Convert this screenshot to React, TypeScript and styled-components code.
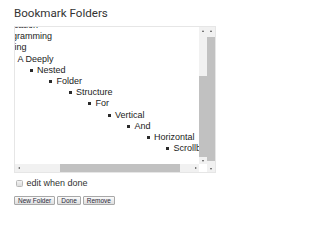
import React, { useLayoutEffect, useRef, useState } from "react";
import styled, { createGlobalStyle, css } from "styled-components";

const GlobalStyle = createGlobalStyle`
  html, body { margin: 0; padding: 0; background: #fff; }
  body { font-family: "Liberation Sans", Arial, sans-serif; color: #222; }
`;

const Page = styled.div`
  padding: 7px 0 0 14px;
  width: 202px;
`;

const Title = styled.h1`
  margin: 0 0 6px;
  font-family: Roboto, "Liberation Sans", Arial, sans-serif;
  font-size: 11.6px;
  line-height: 13px;
  font-weight: normal;
  color: #333;
`;

const OuterBox = styled.div`
  box-sizing: border-box;
  display: flex;
  width: 202px;
  height: 147px;
  border: 1px solid #e6e6e6;
`;

const OuterViewport = styled.div`
  flex: none;
  width: 192px;
  overflow: hidden;
`;

const OuterContent = styled.div`
  padding-bottom: 8px;
`;

const InnerPane = styled.div`
  display: flex;
  flex-direction: column;
  width: 192px;
  height: 145px;
`;

const InnerRow = styled.div`
  flex: 1;
  display: flex;
  min-height: 0;
`;

const TreeViewport = styled.div`
  flex: 1;
  min-width: 0;
  overflow: hidden;
`;

const BottomRow = styled.div`
  flex: none;
  display: flex;
  height: 8px;
`;

const Corner = styled.div`
  flex: none;
  width: 8px;
  background: #fff;
`;

/* ---- scrollbars ---- */
const Bar = styled.div<{ $vertical: boolean }>`
  display: flex;
  flex-direction: ${(p) => (p.$vertical ? "column" : "row")};
  background: #f1f1f1;
  ${(p) =>
    p.$vertical
      ? css`
          flex: none;
          width: 8px;
        `
      : css`
          flex: 1;
          min-width: 0;
          height: 8px;
        `}
`;

type Dir = "up" | "down" | "left" | "right";

const arrowShape: Record<Dir, ReturnType<typeof css>> = {
  up: css`
    border-left: 1.5px solid transparent;
    border-right: 1.5px solid transparent;
    border-bottom: 2px solid #505050;
  `,
  down: css`
    border-left: 1.5px solid transparent;
    border-right: 1.5px solid transparent;
    border-top: 2px solid #505050;
  `,
  left: css`
    border-top: 1.5px solid transparent;
    border-bottom: 1.5px solid transparent;
    border-right: 2px solid #505050;
  `,
  right: css`
    border-top: 1.5px solid transparent;
    border-bottom: 1.5px solid transparent;
    border-left: 2px solid #505050;
  `,
};

const Arrow = styled.div<{ $dir: Dir }>`
  flex: none;
  display: flex;
  align-items: center;
  justify-content: center;
  ${(p) =>
    p.$dir === "up" || p.$dir === "down"
      ? css`
          height: 7px;
        `
      : css`
          width: 7px;
        `}
  &::after {
    content: "";
    width: 0;
    height: 0;
    ${(p) => arrowShape[p.$dir]}
  }
`;

const Track = styled.div<{ $vertical: boolean }>`
  flex: 1;
  display: flex;
  flex-direction: ${(p) => (p.$vertical ? "column" : "row")};
  min-width: 0;
  min-height: 0;
`;

const TrackGap = styled.div`
  flex: none;
`;

const Thumb = styled.div`
  flex: none;
  background: #c1c1c1;
`;

type Metrics = { size: number; pos: number };

function Scrollbar({ vertical, size, pos }: { vertical: boolean } & Metrics) {
  const before = pos * (1 - size) * 100;
  return (
    <Bar $vertical={vertical}>
      <Arrow $dir={vertical ? "up" : "left"} />
      <Track $vertical={vertical}>
        <TrackGap style={{ flexBasis: `${before}%` }} />
        <Thumb style={{ flexBasis: `${size * 100}%` }} />
      </Track>
      <Arrow $dir={vertical ? "down" : "right"} />
    </Bar>
  );
}

/* ---- tree ---- */
const TreeList = styled.div`
  width: max-content;
  padding: 8px 9px 9.6px 41px;
  font-size: 9px;
  line-height: 11.2px;
  color: #222;
`;

const TreeItem = styled.div<{ $level: number }>`
  padding-left: ${(p) => p.$level * 19.5}px;
  white-space: nowrap;
  &::before {
    content: "";
    display: inline-block;
    width: 3px;
    height: 3px;
    background: #2a2a2a;
    margin-left: -7.5px;
    margin-right: 4.5px;
    vertical-align: 1px;
  }
`;

const OptionRow = styled.label`
  display: flex;
  align-items: center;
  gap: 4px;
  margin-top: 5px;
  font-size: 9px;
  line-height: 10px;
  color: #333;
`;

const Check = styled.input`
  appearance: none;
  margin: 0 0 0 1.5px;
  width: 7px;
  height: 7px;
  box-sizing: border-box;
  border: 1px solid #b8b8b8;
  border-radius: 1.5px;
  background: linear-gradient(#f3f3f3, #dcdcdc);
`;

const ButtonRow = styled.div`
  display: flex;
  gap: 2px;
  margin-top: 8px;
`;

const Button = styled.button`
  box-sizing: border-box;
  height: 9px;
  margin: 0;
  padding: 0 3px;
  border: 1px solid #a8a8a8;
  border-radius: 1px;
  background: linear-gradient(#fbfbfb, #dedede);
  font-family: "Liberation Sans", Arial, sans-serif;
  font-size: 6.5px;
  line-height: 7px;
  color: #2a2a3a;
`;

const items: [string, number][] = [
  ["Bookmarks Bar", 0],
  ["Other Bookmarks", 0],
  ["Work", 0],
  ["Reading", 0],
  ["News", 0],
  ["Education", 0],
  ["Programming", 0],
  ["Testing", 0],
  ["A Deeply", 1],
  ["Nested", 2],
  ["Folder", 3],
  ["Structure", 4],
  ["For", 5],
  ["Vertical", 6],
  ["And", 7],
  ["Horizontal", 8],
  ["Scrollbar", 9],
];

export default function App() {
  const treeRef = useRef<HTMLDivElement>(null);
  const [v, setV] = useState<Metrics>({ size: 0.66, pos: 1 });
  const [h, setH] = useState<Metrics>({ size: 0.7, pos: 0.75 });

  useLayoutEffect(() => {
    const el = treeRef.current;
    if (!el) return;
    el.scrollTop = el.scrollHeight;
    el.scrollLeft = 58;
    const vRange = el.scrollHeight - el.clientHeight;
    const hRange = el.scrollWidth - el.clientWidth;
    setV({
      size: el.clientHeight / el.scrollHeight,
      pos: vRange > 0 ? el.scrollTop / vRange : 0,
    });
    setH({
      size: el.clientWidth / el.scrollWidth,
      pos: hRange > 0 ? el.scrollLeft / hRange : 0,
    });
  }, []);

  return (
    <Page>
      <GlobalStyle />
      <Title>Bookmark Folders</Title>
      <OuterBox>
        <OuterViewport>
          <OuterContent>
            <InnerPane>
              <InnerRow>
                <TreeViewport ref={treeRef}>
                  <TreeList>
                    {items.map(([name, level]) => (
                      <TreeItem key={name} $level={level}>
                        {name}
                      </TreeItem>
                    ))}
                  </TreeList>
                </TreeViewport>
                <Scrollbar vertical size={v.size} pos={v.pos} />
              </InnerRow>
              <BottomRow>
                <Scrollbar vertical={false} size={h.size} pos={h.pos} />
                <Corner />
              </BottomRow>
            </InnerPane>
          </OuterContent>
        </OuterViewport>
        <Scrollbar vertical size={0.95} pos={0.45} />
      </OuterBox>
      <OptionRow>
        <Check type="checkbox" />
        edit when done
      </OptionRow>
      <ButtonRow>
        <Button>New Folder</Button>
        <Button>Done</Button>
        <Button>Remove</Button>
      </ButtonRow>
    </Page>
  );
}
